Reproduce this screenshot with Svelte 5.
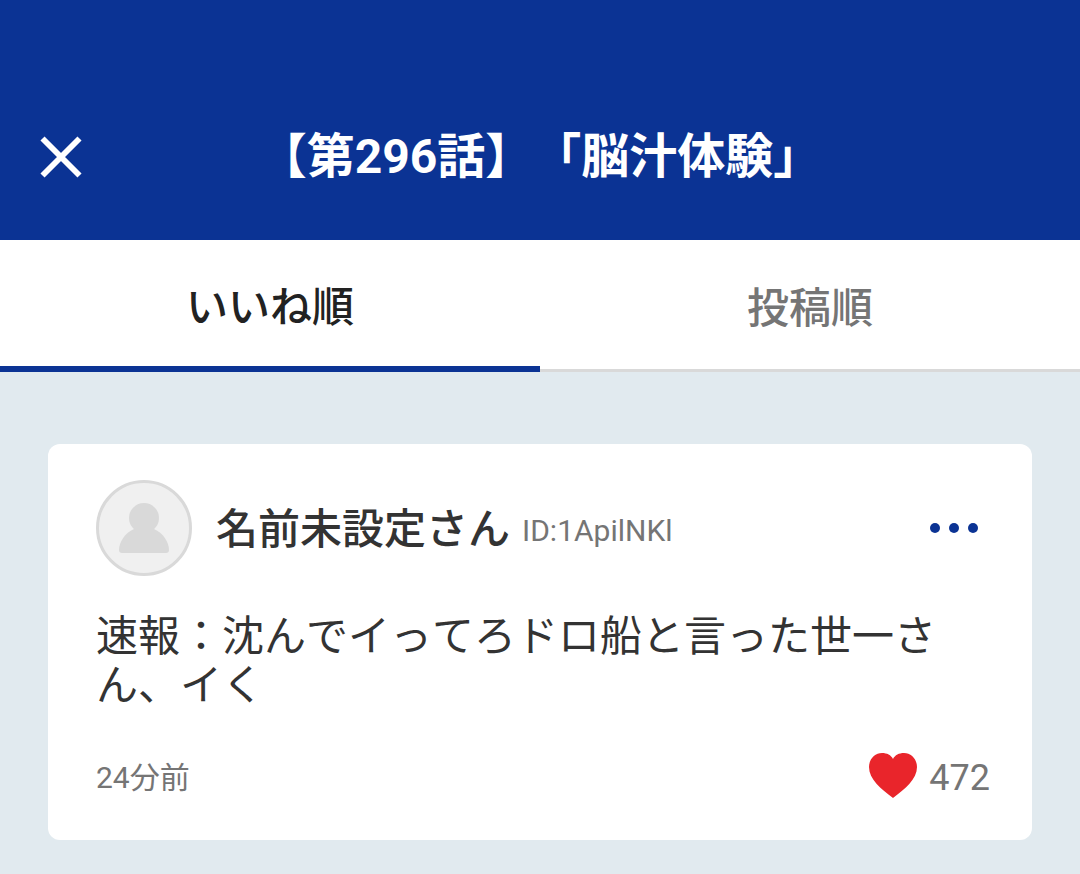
<script>
  let sort = $state('likes');
  const tabs = [
    { id: 'likes', label: 'いいね順' },
    { id: 'newest', label: '投稿順' }
  ];
  const comments = [
    {
      name: '名前未設定さん',
      id: '1ApilNKl',
      body: '速報：沈んでイってろドロ船と言った世一さん、イく',
      time: '24分前',
      likes: 472
    }
  ];
</script>

<div class="page">
  <header>
    <button class="close" aria-label="閉じる">
      <svg width="42" height="42" viewBox="0 0 42 42" aria-hidden="true">
        <path d="M2.5 2.5L39.5 39.5M39.5 2.5L2.5 39.5" stroke="#fff" stroke-width="5.8" fill="none" />
      </svg>
    </button>
    <h1>【第296話】「脳汁体験」</h1>
  </header>

  <div class="tabs" role="tablist">
    {#each tabs as tab (tab.id)}
      <button
        role="tab"
        class:active={sort === tab.id}
        aria-selected={sort === tab.id}
        onclick={() => (sort = tab.id)}>{tab.label}</button>
    {/each}
  </div>

  <main>
    {#each comments as c (c.id)}
      <article>
        <div class="user">
          <svg class="avatar" width="96" height="96" viewBox="0 0 96 96" aria-hidden="true">
            <circle cx="48" cy="48" r="46.5" fill="#f0f0f0" stroke="#d9d9d9" stroke-width="3" />
            <circle cx="48" cy="38" r="15" fill="#d9d9d9" />
            <path d="M38 49H58C67 53 73 62 73 70Q73 73 70 73H26Q23 73 23 70C23 62 29 53 38 49Z" fill="#d9d9d9" />
          </svg>
          <div class="who">
            <span class="name">{c.name}</span>
            <span class="id">ID:{c.id}</span>
          </div>
          <button class="more" aria-label="メニュー">
            <svg width="48" height="12" viewBox="0 0 48 12" aria-hidden="true">
              <g fill="#0b3394">
                <circle cx="5" cy="6" r="5" />
                <circle cx="24" cy="6" r="5" />
                <circle cx="43" cy="6" r="5" />
              </g>
            </svg>
          </button>
        </div>
        <p>{c.body}</p>
        <div class="meta">
          <time>{c.time}</time>
          <button class="like" aria-label="いいね {c.likes}">
            <svg width="48" height="46" viewBox="0 0 48 46" aria-hidden="true">
              <path d="M24 45C12 36 0 26 0 14C0 6 6 0 13 0C18 0 22 2 24 6C26 2 30 0 35 0C42 0 48 6 48 14C48 26 36 36 24 45Z" fill="#e9252b" />
            </svg>
            <span>{c.likes}</span>
          </button>
        </div>
      </article>
    {/each}
  </main>
</div>

<style>
  :global(body) {
    margin: 0;
    background: #e1eaef;
  }
  .page {
    font-family: Roboto, "Noto Sans CJK JP", sans-serif;
    font-kerning: none;
    text-spacing-trim: space-all;
    color: #333;
  }
  button {
    font: inherit;
    font-kerning: inherit;
    color: inherit;
    background: none;
    border: 0;
    padding: 0;
    cursor: pointer;
  }
  svg {
    display: block;
    flex: none;
  }
  header {
    display: grid;
    grid-template-columns: 120px 1fr 120px;
    align-items: center;
    padding: 74px 0 0;
    min-height: 166px;
    background: #0b3394;
    color: #fff;
  }
  .close {
    justify-self: start;
    padding: 0 40px;
  }
  h1 {
    margin: 0;
    font-size: 48px;
    line-height: 72px;
    font-weight: 700;
    text-align: center;
    white-space: nowrap;
  }
  .tabs {
    display: flex;
    background: #fff;
  }
  .tabs button {
    flex: 1;
    box-sizing: border-box;
    height: 132px;
    border-bottom: 3px solid #d9d9d9;
    font-size: 42px;
    font-weight: 500;
    color: #757575;
  }
  .tabs button.active {
    border-bottom: 6px solid #0b3394;
    color: #222;
  }
  main {
    padding: 72px 48px;
  }
  article {
    padding: 36px 42px 38px 48px;
    border-radius: 12px;
    background: #fff;
  }
  .user {
    display: flex;
    align-items: center;
  }
  .who {
    display: flex;
    align-items: center;
    gap: 12px;
    margin-left: 24px;
    padding-top: 4px;
  }
  .name {
    font-size: 42px;
    line-height: 60px;
    font-weight: 500;
  }
  .id {
    font-size: 30px;
    color: #757575;
  }
  .more {
    margin-left: auto;
    padding: 12px;
  }
  p {
    margin: 36px 0 40px;
    font-size: 42px;
    line-height: 49px;
  }
  .meta {
    display: flex;
    align-items: center;
    justify-content: space-between;
    color: #757575;
  }
  time {
    padding-top: 4px;
    font-size: 30px;
    line-height: 36px;
  }
  .like {
    display: flex;
    align-items: center;
    gap: 12px;
    font-size: 36px;
    line-height: 48px;
  }
  .like span {
    padding-top: 4px;
  }
</style>
